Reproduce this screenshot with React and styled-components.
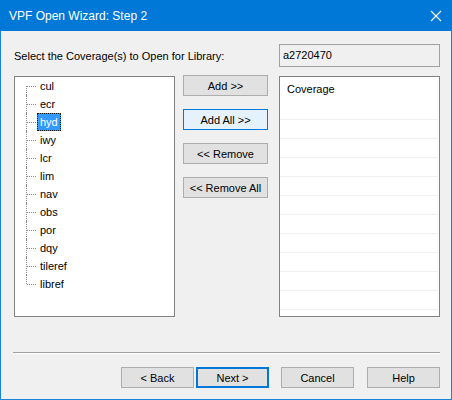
import React from "react";
import styled, { createGlobalStyle } from "styled-components";

const GlobalStyle = createGlobalStyle`
  html, body {
    margin: 0;
    padding: 0;
    background: #ffffff;
  }
  * {
    box-sizing: border-box;
  }
`;

const coverages = ["cul", "ecr", "hyd", "iwy", "lcr", "lim", "nav", "obs", "por", "dqy", "tileref", "libref"];

const Window = styled.div`
  width: 452px;
  height: 400px;
  display: flex;
  flex-direction: column;
  background: #f0f0f0;
  border: 1px solid #1883d7;
  border-top: none;
  font-family: "Liberation Sans", Arial, sans-serif;
  font-size: 11px;
  color: #000;
`;

const TitleBar = styled.div`
  height: 31px;
  margin: 0 -1px;
  background: #0078d7;
  display: flex;
  align-items: center;
  justify-content: space-between;
  padding: 0 10px 0 9px;
  color: #fff;
  font-size: 12px;
`;

const CloseIcon = () => (
  <svg width="12" height="12" viewBox="0 0 12 12">
    <path d="M1 1 L11 11 M11 1 L1 11" stroke="#fff" strokeWidth="1.1" fill="none" />
  </svg>
);

const Body = styled.div`
  flex: 1;
  padding: 13px 11px 0 13px;
  display: flex;
  flex-direction: column;
`;

const TopRow = styled.div`
  height: 23px;
  display: flex;
  align-items: center;
  justify-content: space-between;
`;

const ReadOnlyBox = styled.div`
  width: 161px;
  height: 23px;
  border: 1px solid #a0a0a0;
  background: #f0f0f0;
  padding: 4px 3px;
`;

const MainRow = styled.div`
  margin-top: 9px;
  height: 241px;
  display: flex;
`;

const ListFrame = styled.div`
  width: 161px;
  height: 100%;
  border: 1px solid #828282;
  background: #fff;
  overflow: hidden;
`;

const Tree = styled.ul`
  list-style: none;
  margin: 0;
  padding: 0;
`;

const TreeRow = styled.li`
  position: relative;
  height: 18px;
  display: flex;
  align-items: center;
  padding-left: 22px;

  &::before {
    content: "";
    position: absolute;
    left: 11px;
    top: ${(p) => (p.$first ? "9px" : "0")};
    height: ${(p) => (p.$first || p.$last ? "9px" : "18px")};
    border-left: 1px dotted #8a8a8a;
  }

  &::after {
    content: "";
    position: absolute;
    left: 12px;
    top: 9px;
    width: 9px;
    border-top: 1px dotted #8a8a8a;
  }
`;

const TreeLabel = styled.span`
  height: 18px;
  line-height: 16px;
  padding: 0 2px;
  border: 1px dotted ${(p) => (p.$selected ? "#1a1a1a" : "transparent")};
  background: ${(p) => (p.$selected ? "#3399ff" : "transparent")};
  color: ${(p) => (p.$selected ? "#fff" : "#000")};
`;

const ButtonColumn = styled.div`
  width: 85px;
  margin: -1px 11px 0 8px;
  display: flex;
  flex-direction: column;
  gap: 13px;
`;

const Button = styled.button`
  height: 21px;
  width: ${(p) => p.$width || "100%"};
  padding: 0;
  font-family: inherit;
  font-size: 11px;
  color: #000;
  background: ${(p) => (p.$hover ? "#e5f1fb" : "#e1e1e1")};
  border: 1px solid ${(p) => (p.$hover ? "#0078d7" : "#adadad")};
  box-shadow: ${(p) => (p.$default ? "inset 0 0 0 1px #0078d7" : "none")};
  border-color: ${(p) => (p.$default ? "#0078d7" : p.$hover ? "#0078d7" : "#adadad")};
`;

const ListHeader = styled.div`
  height: 24px;
  padding: 6px 0 0 7px;
`;

const ListRow = styled.div`
  height: 19px;
  margin-right: 1px;
  border-bottom: 1px solid #f0f0f0;
`;

const Separator = styled.div`
  margin: 35px 0 0 -1px;
  height: 2px;
  border-top: 1px solid #a0a0a0;
  border-bottom: 1px solid #ffffff;
`;

const Footer = styled.div`
  margin-top: 13px;
  display: flex;
  justify-content: flex-end;
`;

const Spacer = styled.div`
  width: ${(p) => p.$w}px;
`;

export default function App() {
  return (
    <>
      <GlobalStyle />
      <Window>
        <TitleBar>
          <span>VPF Open Wizard: Step 2</span>
          <CloseIcon />
        </TitleBar>
        <Body>
          <TopRow>
            <span>Select the Coverage(s) to Open for Library:</span>
            <ReadOnlyBox>a2720470</ReadOnlyBox>
          </TopRow>
          <MainRow>
            <ListFrame>
              <Tree>
                {coverages.map((name, i) => (
                  <TreeRow key={name} $first={i === 0} $last={i === coverages.length - 1}>
                    <TreeLabel $selected={name === "hyd"}>{name}</TreeLabel>
                  </TreeRow>
                ))}
              </Tree>
            </ListFrame>
            <ButtonColumn>
              <Button>Add &gt;&gt;</Button>
              <Button $hover>Add All &gt;&gt;</Button>
              <Button>&lt;&lt; Remove</Button>
              <Button>&lt;&lt; Remove All</Button>
            </ButtonColumn>
            <ListFrame>
              <ListHeader>Coverage</ListHeader>
              {Array.from({ length: 11 }).map((_, i) => (
                <ListRow key={i} />
              ))}
            </ListFrame>
          </MainRow>
          <Separator />
          <Footer>
            <Button $width="73px">&lt; Back</Button>
            <Spacer $w={2} />
            <Button $width="73px" $default>Next &gt;</Button>
            <Spacer $w={12} />
            <Button $width="73px">Cancel</Button>
            <Spacer $w={13} />
            <Button $width="73px">Help</Button>
          </Footer>
        </Body>
      </Window>
    </>
  );
}
